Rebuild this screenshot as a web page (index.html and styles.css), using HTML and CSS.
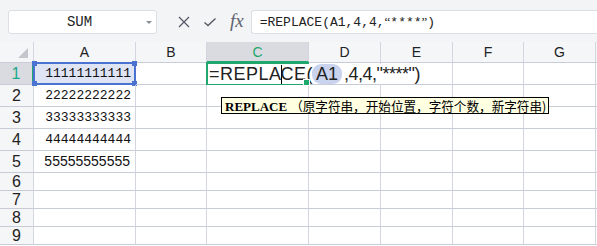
FILE: index.html
```html
<!DOCTYPE html>
<html lang="zh">
<head>
    <meta charset="UTF-8">
    <title>REPLACE</title>
    <link rel="stylesheet" href="styles.css">
</head>
<body>

<div class="toolbar">
    <div class="name-box">
        <span class="name-text">SUM</span>
        <span class="name-arrow"></span>
    </div>
    <div class="bar-icons">
        <svg class="icon" width="14" height="14" viewBox="0 0 14 14"><path d="M2 2 L12 12 M12 2 L2 12" stroke="#555b66" stroke-width="1.3" fill="none"/></svg>
        <svg class="icon" width="14" height="14" viewBox="0 0 14 14"><path d="M1.5 7.5 L5 10.5 L12.5 3.5" stroke="#555b66" stroke-width="1.4" fill="none"/></svg>
        <span class="fx">fx</span>
    </div>
    <div class="formula-input">=REPLACE(A1,4,4,<span class="q">“</span>****<span class="q">”</span>)</div>
</div>

<div class="sheet">
    <div class="corner"><span class="corner-tri"></span></div>
    <div class="col-head">A</div>
    <div class="col-head">B</div>
    <div class="col-head active">C</div>
    <div class="col-head">D</div>
    <div class="col-head">E</div>
    <div class="col-head">F</div>
    <div class="col-head">G</div>
    <div class="col-head rest"></div>

    <!-- row 1 -->
    <div class="row-head active tall">1</div>
    <div class="cell tall ref">
        <span class="num">11111111111</span>
        <span class="handle tl"></span><span class="handle tr"></span>
        <span class="handle bl"></span><span class="handle br"></span>
    </div>
    <div class="cell tall"></div>
    <div class="cell tall editing">
        <span class="edit-text"><span class="fn">=REPLA<span class="caret"></span>CE(</span><span class="ref-pill">A1</span><span class="args">,4,4,"****")</span></span>
        <span class="fill-handle"></span>
        <div class="tip"><b>REPLACE</b> <span class="tip-args">（原字符串，开始位置，字符个数，新字符串)</span></div>
    </div>
    <div class="cell tall"></div>
    <div class="cell tall"></div>
    <div class="cell tall"></div>
    <div class="cell tall"></div>
    <div class="cell tall rest"></div>

    <!-- row 2 -->
    <div class="row-head tall">2</div>
    <div class="cell tall"><span class="num">22222222222</span></div>
    <div class="cell tall"></div><div class="cell tall"></div><div class="cell tall"></div>
    <div class="cell tall"></div><div class="cell tall"></div><div class="cell tall"></div>
    <div class="cell tall rest"></div>

    <!-- row 3 -->
    <div class="row-head tall">3</div>
    <div class="cell tall"><span class="num">33333333333</span></div>
    <div class="cell tall"></div><div class="cell tall"></div><div class="cell tall"></div>
    <div class="cell tall"></div><div class="cell tall"></div><div class="cell tall"></div>
    <div class="cell tall rest"></div>

    <!-- row 4 -->
    <div class="row-head tall">4</div>
    <div class="cell tall"><span class="num">44444444444</span></div>
    <div class="cell tall"></div><div class="cell tall"></div><div class="cell tall"></div>
    <div class="cell tall"></div><div class="cell tall"></div><div class="cell tall"></div>
    <div class="cell tall rest"></div>

    <!-- row 5 -->
    <div class="row-head tall">5</div>
    <div class="cell tall"><span class="num sans">55555555555</span></div>
    <div class="cell tall"></div><div class="cell tall"></div><div class="cell tall"></div>
    <div class="cell tall"></div><div class="cell tall"></div><div class="cell tall"></div>
    <div class="cell tall rest"></div>

    <!-- rows 6-9 -->
    <div class="row-head">6</div>
    <div class="cell"></div><div class="cell"></div><div class="cell"></div><div class="cell"></div>
    <div class="cell"></div><div class="cell"></div><div class="cell"></div><div class="cell rest"></div>

    <div class="row-head">7</div>
    <div class="cell"></div><div class="cell"></div><div class="cell"></div><div class="cell"></div>
    <div class="cell"></div><div class="cell"></div><div class="cell"></div><div class="cell rest"></div>

    <div class="row-head">8</div>
    <div class="cell"></div><div class="cell"></div><div class="cell"></div><div class="cell"></div>
    <div class="cell"></div><div class="cell"></div><div class="cell"></div><div class="cell rest"></div>

    <div class="row-head">9</div>
    <div class="cell"></div><div class="cell"></div><div class="cell"></div><div class="cell"></div>
    <div class="cell"></div><div class="cell"></div><div class="cell"></div><div class="cell rest"></div>
</div>

</body>
</html>
```

FILE: styles.css
```css
* {
    box-sizing: border-box;
}
body {
    margin: 0;
    padding: 0;
    width: 597px;
    height: 246px;
    overflow: hidden;
    background-color: #ffffff;
    font-family: "Liberation Sans", Arial, "Noto Sans CJK SC", sans-serif;
}
.toolbar {
    height: 42px;
    background-color: #f3f4f6;
    display: flex;
    align-items: flex-start;
    padding: 10px 0 0 8px;
}
.name-box {
    width: 149px;
    height: 24px;
    background-color: #fff;
    border: 1px solid #dcdfe4;
    border-radius: 3px;
    display: flex;
    align-items: center;
}
.name-text {
    flex: 1;
    text-align: center;
    font-family: "Liberation Mono", monospace;
    font-size: 14px;
    color: #222;
    padding-left: 4px;
}
.name-arrow {
    width: 0;
    height: 0;
    border-left: 3px solid transparent;
    border-right: 3px solid transparent;
    border-top: 3px solid #8a8f99;
    margin-right: 4px;
}
.bar-icons {
    display: flex;
    align-items: center;
    height: 24px;
    margin-left: 20px;
    gap: 12px;
}
.fx {
    font-family: "Liberation Serif", serif;
    font-style: italic;
    font-size: 19px;
    color: #5d636e;
    margin-left: 1px;
    margin-top: -2px;
}
.formula-input {
    margin-left: 7px;
    flex: 1;
    height: 24px;
    background-color: #fff;
    border: 1px solid #dcdfe4;
    border-right: none;
    border-radius: 3px 0 0 3px;
    font-family: "Liberation Mono", monospace;
    font-size: 13px;
    line-height: 22px;
    padding-left: 8px;
    color: #222;
}
.q {
    font-family: "Liberation Serif", serif;
}

/* grid */
.sheet {
    display: grid;
    grid-template-columns: 34px 102px 71px 102px 72px 72px 71px 72px 1fr;
    grid-template-rows: 21px repeat(5, 22px) repeat(4, 18px);
}
.corner, .col-head, .row-head, .cell {
    border-right: 1px solid #d3d6de;
    border-bottom: 1px solid #c8ccd6;
}
.corner {
    background-color: #f5f6f8;
    position: relative;
}
.corner-tri {
    position: absolute;
    right: 5px;
    bottom: 4px;
    width: 0;
    height: 0;
    border-left: 10px solid transparent;
    border-bottom: 10px solid #c3c6cc;
}
.col-head {
    background-color: #f5f6f8;
    text-align: center;
    font-size: 14px;
    line-height: 20px;
    color: #222;
}
.col-head.active {
    background-color: #d9dbe0;
    color: #1fa76e;
    border-bottom: 2px solid #1fa76e;
}
.row-head {
    background-color: #f5f6f8;
    text-align: center;
    font-size: 16px;
    color: #222;
    line-height: 17px;
}
.row-head.tall {
    line-height: 21px;
}
.row-head.active {
    background-color: #d9dbe0;
    color: #20a88e;
    border-right: 2px solid #1fa76e;
}
.rest {
    border-right: none;
}
.cell {
    position: relative;
}
.num {
    display: block;
    text-align: right;
    padding-right: 4px;
    font-family: "Liberation Mono", monospace;
    font-size: 13px;
    line-height: 21px;
    color: #111;
}
.num.sans {
    font-family: "Liberation Sans", Arial, sans-serif;
    font-size: 14px;
    padding-right: 5px;
}
.ref {
    background-color: #dfe4f5;
    border: 2px solid #4a72d0;
    margin: -1px 0 0 -1px;
}
.ref .num {
    line-height: 19px;
    padding-right: 3px;
}
.handle {
    position: absolute;
    width: 5px;
    height: 5px;
    background-color: #4a72d0;
}
.handle.tl { left: -3px; top: -3px; }
.handle.tr { right: -3px; top: -3px; }
.handle.bl { left: -3px; bottom: -3px; }
.handle.br { right: -3px; bottom: -3px; }

.editing {
    border: 2px solid #1fa76e;
    margin: -1px 0 0 -1px;
    white-space: nowrap;
    overflow: visible;
    z-index: 2;
}
.edit-text {
    position: relative;
    display: inline-block;
    background-color: #fff;
    font-size: 18px;
    line-height: 20px;
    color: #222;
    padding: 0 4px 0 1px;
    z-index: 2;
}
.fn {
    letter-spacing: 0.5px;
}
.args {
    letter-spacing: -0.5px;
}
.caret {
    display: inline-block;
    width: 1px;
    height: 19px;
    background-color: #000;
    vertical-align: -4px;
    margin: 0 -1px 0 -1px;
}
.ref-pill {
    display: inline-block;
    background-color: #c9d3ee;
    border-radius: 9px;
    padding: 0 4px;
    margin: 0 2px 0 -1px;
    line-height: 20px;
}
.fill-handle {
    position: absolute;
    right: -3px;
    bottom: -3px;
    width: 5px;
    height: 5px;
    background-color: #1fa76e;
    border: 1px solid #fff;
    box-sizing: content-box;
    z-index: 3;
}
.tip {
    position: absolute;
    left: 13px;
    top: 33px;
    height: 17px;
    background-color: #ffffe1;
    border: 1px solid #000;
    font-family: "Liberation Serif", serif;
    font-size: 12px;
    line-height: 15px;
    padding: 0 2px 0 3px;
    color: #000;
    z-index: 4;
}
.tip b {
    font-size: 13px;
}
.tip-args {
    font-family: "Noto Sans CJK SC", sans-serif;
    font-size: 12.6px;
}
```
